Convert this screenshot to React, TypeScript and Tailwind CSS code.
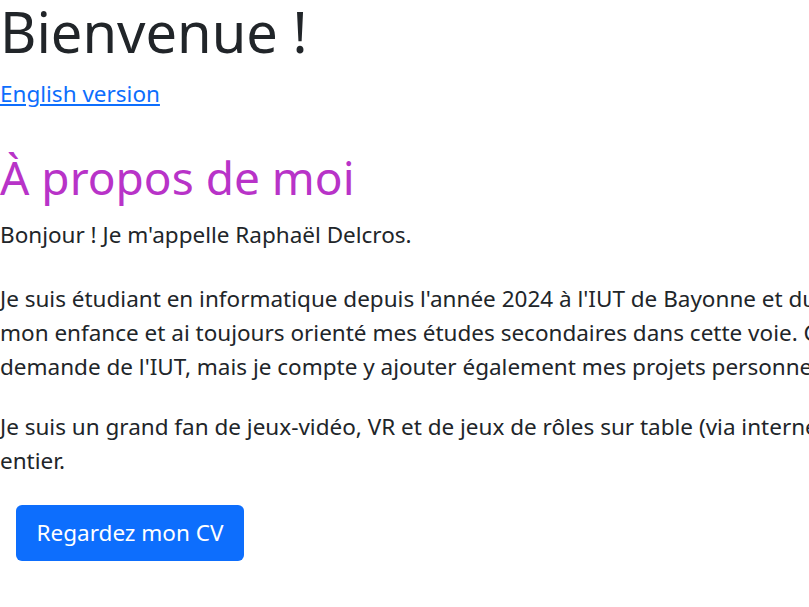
export default function App() {
  return (
    <div
      className="w-full min-h-screen overflow-hidden bg-white text-[#212529]"
      style={{ fontFamily: '"Noto Sans", "Open Sans", sans-serif' }}
    >
      <h1 className="pt-[3px] text-[56px] leading-[56px] font-normal whitespace-nowrap">
        Bienvenue !
      </h1>

      <a
        href="#"
        className="block mt-[18px] text-[22.5px] leading-[34px] text-[#0d6efd] underline w-fit"
      >
        English version
      </a>

      <section>
        <h2 className="mt-[40px] text-[46px] leading-[52px] font-normal text-[#b833c8] whitespace-nowrap">
          À propos de moi
        </h2>

        <p className="mt-[15px] text-[22.5px] leading-[34px] whitespace-nowrap">
          Bonjour ! Je m'appelle Raphaël Delcros.
        </p>

        <p className="mt-[30px] text-[22.5px] leading-[34px] whitespace-nowrap">
          <span className="block">
            Je suis étudiant en informatique depuis l'année 2024 à l'IUT de
            Bayonne et du Pays Basque. Je suis passionné d'informatique depuis
          </span>
          <span className="block">
            mon enfance et ai toujours orienté mes études secondaires dans cette
            voie. Ce portfolio a été réalisé à la
          </span>
          <span className="block">
            demande de l'IUT, mais je compte y ajouter également mes projets
            personnels.
          </span>
        </p>

        <p className="mt-[26px] text-[22.5px] leading-[34px] whitespace-nowrap">
          <span className="block">
            Je suis un grand fan de jeux-vidéo, VR et de jeux de rôles sur table
            (via internet) et de la culture geek en
          </span>
          <span className="block">entier.</span>
        </p>

        <button className="mt-[27px] ml-[16px] h-[56px] w-[228px] rounded-[6px] bg-[#0d6efd] text-[22.5px] leading-[56px] text-white">
          Regardez mon CV
        </button>
      </section>
    </div>
  );
}
